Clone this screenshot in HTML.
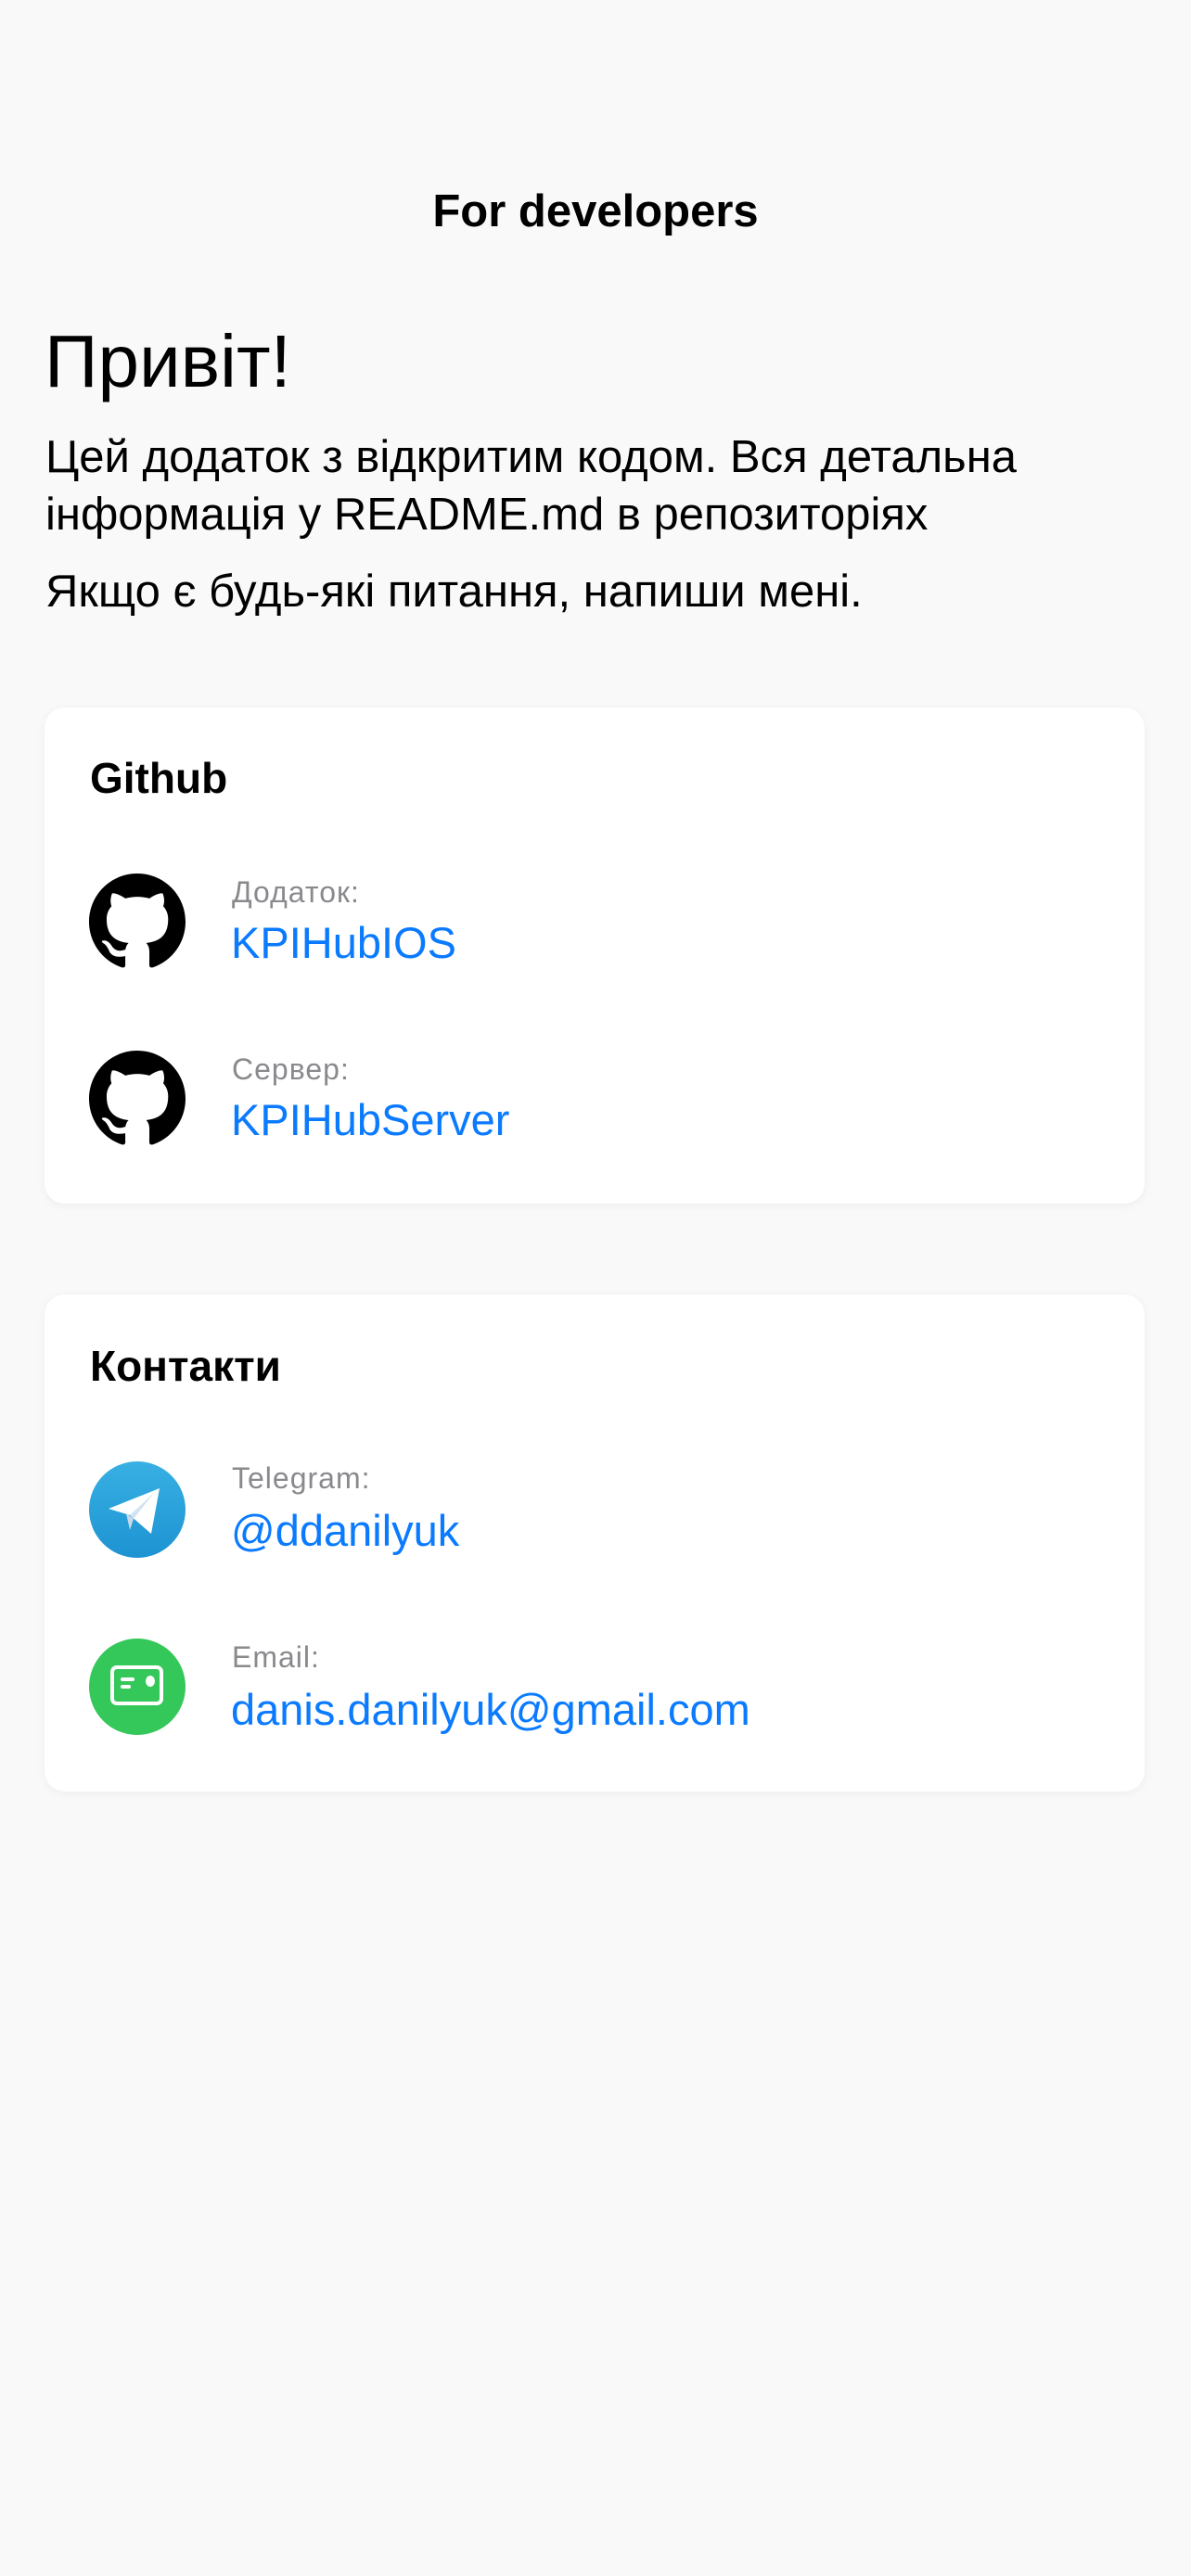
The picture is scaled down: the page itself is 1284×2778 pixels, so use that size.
<!DOCTYPE html>
<html><head><meta charset="utf-8"><style>
*{margin:0;padding:0;box-sizing:border-box}
body{width:1284px;height:2778px;background:#f9f9f9;font-family:"Liberation Sans",sans-serif;position:relative;overflow:hidden;color:#000}
.a{position:absolute;white-space:nowrap}
.card{position:absolute;left:48px;width:1186px;background:#fff;border-radius:22px;box-shadow:0 2px 10px rgba(0,0,0,0.05)}
.lbl{font-size:32px;color:#8a8a8e;line-height:36px;letter-spacing:1px}
.lnk{font-size:47px;color:#0a7aff;line-height:52px}
.h{font-size:46px;font-weight:bold;line-height:52px}
.ic{position:absolute;left:96px;width:104px;height:104px}
.p{font-size:49px;line-height:62px}
</style></head><body>
<div class="a" style="left:0;width:1284px;text-align:center;top:200px;font-size:49px;font-weight:bold;line-height:56px">For developers</div>
<div class="a" style="left:48px;top:342px;font-size:80px;line-height:96px">Привіт!</div>
<div class="a p" style="left:49px;top:462px">Цей додаток з відкритим кодом. Вся детальна<br>інформація у README.md в репозиторіях</div>
<div class="a p" style="left:49px;top:607px">Якщо є будь-які питання, напиши мені.</div>

<div class="card" style="top:763px;height:535px"></div>
<div class="a h" style="left:97px;top:813px">Github</div>
<svg class="ic" style="top:942px" viewBox="0 0 16 16"><path fill="#000" d="M8 0C3.58 0 0 3.58 0 8c0 3.54 2.29 6.53 5.47 7.59.4.07.55-.17.55-.38 0-.19-.01-.82-.01-1.49-2.01.37-2.53-.49-2.69-.94-.09-.23-.48-.94-.82-1.13-.28-.15-.68-.52-.01-.53.63-.01 1.08.58 1.23.82.72 1.21 1.87.87 2.33.66.07-.52.28-.87.51-1.07-1.78-.2-3.64-.89-3.640-3.95 0-.87.31-1.59.82-2.15-.08-.2-.36-1.02.08-2.12 0 0 .67-.21 2.2.82.64-.18 1.32-.27 2-.27.68 0 1.36.09 2 .27 1.53-1.04 2.2-.82 2.2-.82.44 1.1.16 1.92.08 2.12.51.56.82 1.27.82 2.15 0 3.07-1.87 3.75-3.65 3.95.29.25.54.73.54 1.48 0 1.07-.01 1.93-.01 2.2 0 .21.15.46.55.38A8.013 8.013 0 0016 8c0-4.42-3.58-8-8-8z"/></svg>
<div class="a lbl" style="left:250px;top:944px">Додаток:</div>
<div class="a lnk" style="left:249px;top:991px">KPIHubIOS</div>
<svg class="ic" style="top:1133px" viewBox="0 0 16 16"><path fill="#000" d="M8 0C3.58 0 0 3.58 0 8c0 3.54 2.29 6.53 5.47 7.59.4.07.55-.17.55-.38 0-.19-.01-.82-.01-1.49-2.01.37-2.53-.49-2.69-.94-.09-.23-.48-.94-.82-1.13-.28-.15-.68-.52-.01-.53.63-.01 1.08.58 1.23.82.72 1.21 1.87.87 2.33.66.07-.52.28-.87.51-1.07-1.78-.2-3.64-.89-3.64-3.95 0-.87.31-1.59.82-2.15-.08-.2-.36-1.02.08-2.12 0 0 .67-.21 2.2.82.64-.18 1.32-.27 2-.27.68 0 1.36.09 2 .27 1.53-1.04 2.2-.82 2.2-.82.44 1.1.16 1.92.08 2.12.51.56.82 1.27.82 2.15 0 3.07-1.87 3.75-3.65 3.95.29.25.54.73.54 1.48 0 1.07-.01 1.93-.01 2.2 0 .21.15.46.55.38A8.013 8.013 0 0016 8c0-4.42-3.58-8-8-8z"/></svg>
<div class="a lbl" style="left:250px;top:1135px">Сервер:</div>
<div class="a lnk" style="left:249px;top:1182px">KPIHubServer</div>

<div class="card" style="top:1396px;height:536px"></div>
<div class="a h" style="left:97px;top:1447px">Контакти</div>
<svg class="ic" style="top:1576px" viewBox="0 0 104 104"><defs><linearGradient id="g" x1="0" y1="0" x2="0" y2="1"><stop offset="0" stop-color="#38b0e3"/><stop offset="1" stop-color="#1d93d2"/></linearGradient></defs><circle cx="52" cy="52" r="52" fill="url(#g)"/><path d="M21 51 L76 29 L67 78 L44 58 Z" fill="#fff"/><path d="M40 56 L44 74 L48 62 Z" fill="#c8daea"/><path d="M44 58 L70 34 L48 62 Z" fill="#d2e4f1"/></svg>
<div class="a lbl" style="left:250px;top:1576px">Telegram:</div>
<div class="a lnk" style="left:249px;top:1625px">@ddanilyuk</div>
<svg class="ic" style="top:1767px" viewBox="0 0 104 104"><circle cx="52" cy="52" r="52" fill="#34c759"/><rect x="25" y="31" width="53" height="39" rx="5" fill="none" stroke="#fff" stroke-width="4"/><rect x="34" y="42" width="15" height="4" rx="2" fill="#fff"/><rect x="34" y="50" width="11" height="4" rx="2" fill="#fff"/><ellipse cx="66" cy="46" rx="5" ry="6" fill="#fff"/></svg>
<div class="a lbl" style="left:250px;top:1769px">Email:</div>
<div class="a lnk" style="left:249px;top:1818px">danis.danilyuk@gmail.com</div>
</body></html>
